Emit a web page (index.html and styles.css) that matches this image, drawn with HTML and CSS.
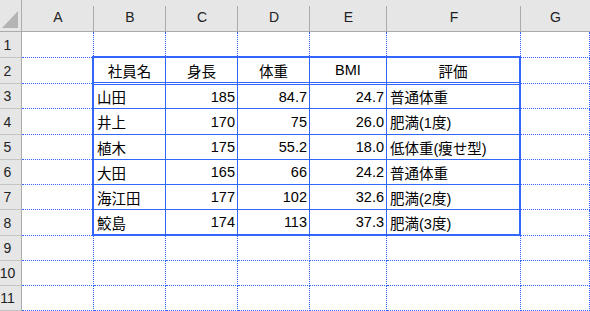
FILE: index.html
```html
<!DOCTYPE html>
<html lang="ja">
<head>
<meta charset="utf-8">
<link rel="stylesheet" href="styles.css">
</head>
<body>
<div class="sheet">
  <div class="corner"><svg width="22" height="32" viewBox="0 0 22 32"><polygon points="2,28 18,28 18,11" fill="#b4b4b4"/></svg></div>
  <div class="colh">A</div><div class="colh">B</div><div class="colh">C</div><div class="colh">D</div><div class="colh">E</div><div class="colh">F</div><div class="colh last">G</div>

  <div class="rowh">1</div><div class="c"></div><div class="c"></div><div class="c"></div><div class="c"></div><div class="c"></div><div class="c"></div><div class="c"></div>
  <div class="rowh">2</div><div class="c"></div><div class="c"></div>
  <div class="rowh">3</div><div class="c"></div><div class="c"></div>
  <div class="rowh">4</div><div class="c"></div><div class="c"></div>
  <div class="rowh">5</div><div class="c"></div><div class="c"></div>
  <div class="rowh">6</div><div class="c"></div><div class="c"></div>
  <div class="rowh">7</div><div class="c"></div><div class="c"></div>
  <div class="rowh">8</div><div class="c"></div><div class="c"></div>
  <div class="rowh">9</div><div class="c"></div><div class="c"></div><div class="c"></div><div class="c"></div><div class="c"></div><div class="c"></div><div class="c"></div>
  <div class="rowh">10</div><div class="c"></div><div class="c"></div><div class="c"></div><div class="c"></div><div class="c"></div><div class="c"></div><div class="c"></div>
  <div class="rowh">11</div><div class="c"></div><div class="c"></div><div class="c"></div><div class="c"></div><div class="c"></div><div class="c"></div><div class="c"></div>

  <div class="table">
    <div class="t th">社員名</div><div class="t th">身長</div><div class="t th">体重</div><div class="t th">BMI</div><div class="t th end">評価</div>
    <div class="t">山田</div><div class="t n">185</div><div class="t n">84.7</div><div class="t n">24.7</div><div class="t end">普通体重</div>
    <div class="t">井上</div><div class="t n">170</div><div class="t n">75</div><div class="t n">26.0</div><div class="t end">肥満(1度)</div>
    <div class="t">植木</div><div class="t n">175</div><div class="t n">55.2</div><div class="t n">18.0</div><div class="t end">低体重(痩せ型)</div>
    <div class="t">大田</div><div class="t n">165</div><div class="t n">66</div><div class="t n">24.2</div><div class="t end">普通体重</div>
    <div class="t">海江田</div><div class="t n">177</div><div class="t n">102</div><div class="t n">32.6</div><div class="t end">肥満(2度)</div>
    <div class="t lastrow">鮫島</div><div class="t n lastrow">174</div><div class="t n lastrow">113</div><div class="t n lastrow">37.3</div><div class="t end lastrow">肥満(3度)</div>
  </div>
</div>
</body>
</html>
```

FILE: styles.css
```css
* { box-sizing: border-box; }
html, body { margin: 0; padding: 0; background: #fff; }
body {
  width: 590px;
  height: 311px;
  overflow: hidden;
  font-family: "Liberation Sans", "Noto Sans CJK JP", sans-serif;
  font-size: 14px;
  color: #000;
}
.sheet {
  display: grid;
  grid-template-columns: 22px 72px 72px 72px 72px 77px 134px 1fr;
  grid-template-rows: 32px 26px 26px 25px 26px 25px 25px 25px 26px 25px 25px 25px;
  width: 590px;
  height: 311px;
}
.corner {
  background: #e6e6e6;
  border-right: 1px solid #ababab;
  border-bottom: 1px solid #ababab;
  line-height: 0;
}
.colh {
  background: linear-gradient(#ababab, #ababab) right bottom / 1px 25px no-repeat, #e6e6e6;
  border-bottom: 1px solid #ababab;
  text-align: center;
  padding-top: 9px;
  font-size: 14px;
  line-height: 16px;
  color: #222;
}
.colh.last { background: #e6e6e6; }
.rowh {
  background: #e6e6e6;
  border-right: 1px solid #ababab;
  border-bottom: 1px solid #c4c4c4;
  padding-right: 6px;
  font-size: 14px;
  display: flex;
  align-items: center;
  justify-content: center;
  color: #222;
  white-space: nowrap;
}
.c {
  border-right: 1px dotted #3366ff;
  border-bottom: 1px dotted #3366ff;
}
.table {
  grid-column: 3 / 8;
  grid-row: 3 / 10;
  margin: -2px 0 0 -2px;
  border: 2px solid #3366ff;
  background: #fff;
  display: grid;
  grid-template-columns: 72px 72px 72px 77px 1fr;
  grid-template-rows: 27px 24px 26px 25px 25px 25px 24px;
}
.t {
  border-right: 1px solid #3366ff;
  border-bottom: 1px solid #3366ff;
  padding: 0 3px;
  display: flex;
  align-items: center;
  white-space: nowrap;
  font-size: 14.5px;
}
.t.end { border-right: none; }
.t.lastrow { border-bottom: none; }
.t.n { justify-content: flex-end; padding-right: 2px; }
.t.th {
  border-bottom: 3px double #3366ff;
  justify-content: center;
}
```
